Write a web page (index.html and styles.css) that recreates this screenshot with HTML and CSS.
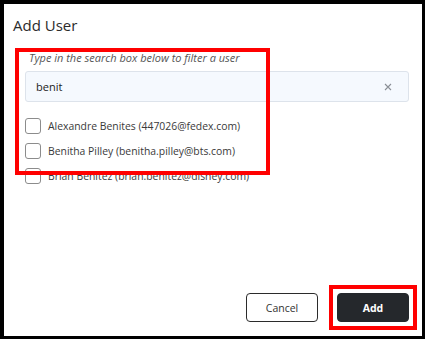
FILE: index.html
```html
<!DOCTYPE html>
<html>
<head>
<meta charset="utf-8">
<link rel="stylesheet" href="styles.css">
</head>
<body>
<div class="modal">
  <h1 class="title">Add User</h1>
  <div class="content">
    <p class="hint">Type in the search box below to filter a user</p>
    <div class="search">
      <span class="search-text">benit</span>
      <svg class="clear" width="8" height="8" viewBox="0 0 8 8"><path d="M1 1L7 7M7 1L1 7" stroke="#8a8f96" stroke-width="1.1" fill="none"/></svg>
    </div>
    <ul class="list">
      <li class="row"><span class="box"></span><span class="label">Alexandre Benites (447026@fedex.com)</span></li>
      <li class="row"><span class="box"></span><span class="label">Benitha Pilley (benitha.pilley@bts.com)</span></li>
      <li class="row"><span class="box"></span><span class="label">Brian Benitez (brian.benitez@disney.com)</span></li>
    </ul>
  </div>
  <div class="footer">
    <button class="btn btn-cancel">Cancel</button>
    <button class="btn btn-add">Add</button>
  </div>
</div>
<div class="mark mark-list"></div>
<div class="mark mark-add"></div>
</body>
</html>
```
FILE: styles.css
```css
html, body {
  margin: 0;
  padding: 0;
}
body {
  background: #000;
  width: 425px;
  height: 339px;
  box-sizing: border-box;
  padding: 4px 3px 3px 4px;
  font-family: "Open Sans", "DejaVu Sans", sans-serif;
  position: relative;
  overflow: hidden;
}
.modal {
  background: #fff;
  height: 332px;
  box-sizing: border-box;
  display: flex;
  flex-direction: column;
  padding: 10px 13px 14px 9px;
}
.title {
  margin: 0;
  font-size: 15px;
  font-weight: 400;
  line-height: 22px;
  color: #2b2b2b;
}
.content {
  padding-left: 12px;
  flex: 1;
}
.hint {
  margin: 14px 0 0 4px;
  font-size: 11px;
  font-style: italic;
  line-height: 15px;
  color: #555;
}
.search {
  margin-top: 6px;
  height: 31px;
  box-sizing: border-box;
  border: 1px solid #dde3eb;
  border-radius: 3px;
  background: #f5f9fe;
  display: flex;
  align-items: center;
  justify-content: space-between;
  padding: 0 16px 0 10px;
}
.search-text {
  font-size: 11px;
  color: #222;
}
.clear {
  display: block;
}
.list {
  list-style: none;
  margin: 16px 0 0 0;
  padding: 0;
}
.row {
  display: flex;
  align-items: center;
  height: 16px;
  margin-bottom: 9px;
}
.box {
  width: 16px;
  height: 16px;
  box-sizing: border-box;
  border: 1px solid #8c8c8c;
  border-radius: 3px;
  margin-right: 7px;
  flex: none;
}
.label {
  font-size: 10.4px;
  color: #3a3a3a;
  white-space: nowrap;
}
.footer {
  display: flex;
  justify-content: flex-end;
  gap: 19px;
}
.btn {
  width: 72px;
  height: 29px;
  border-radius: 4px;
  font-family: "Open Sans", "DejaVu Sans", sans-serif;
  font-size: 10.5px;
  cursor: pointer;
}
.btn-cancel {
  background: #fff;
  border: 1px solid #2b2b2b;
  color: #333;
}
.btn-add {
  background: #25282c;
  border: 1px solid #25282c;
  color: #fff;
  font-weight: 700;
}
.mark {
  position: absolute;
  border: 4px solid #ff0000;
  box-sizing: border-box;
}
.mark-list {
  left: 15px;
  top: 48px;
  width: 255px;
  height: 127px;
}
.mark-add {
  left: 329px;
  top: 285px;
  width: 88px;
  height: 45px;
}
```
